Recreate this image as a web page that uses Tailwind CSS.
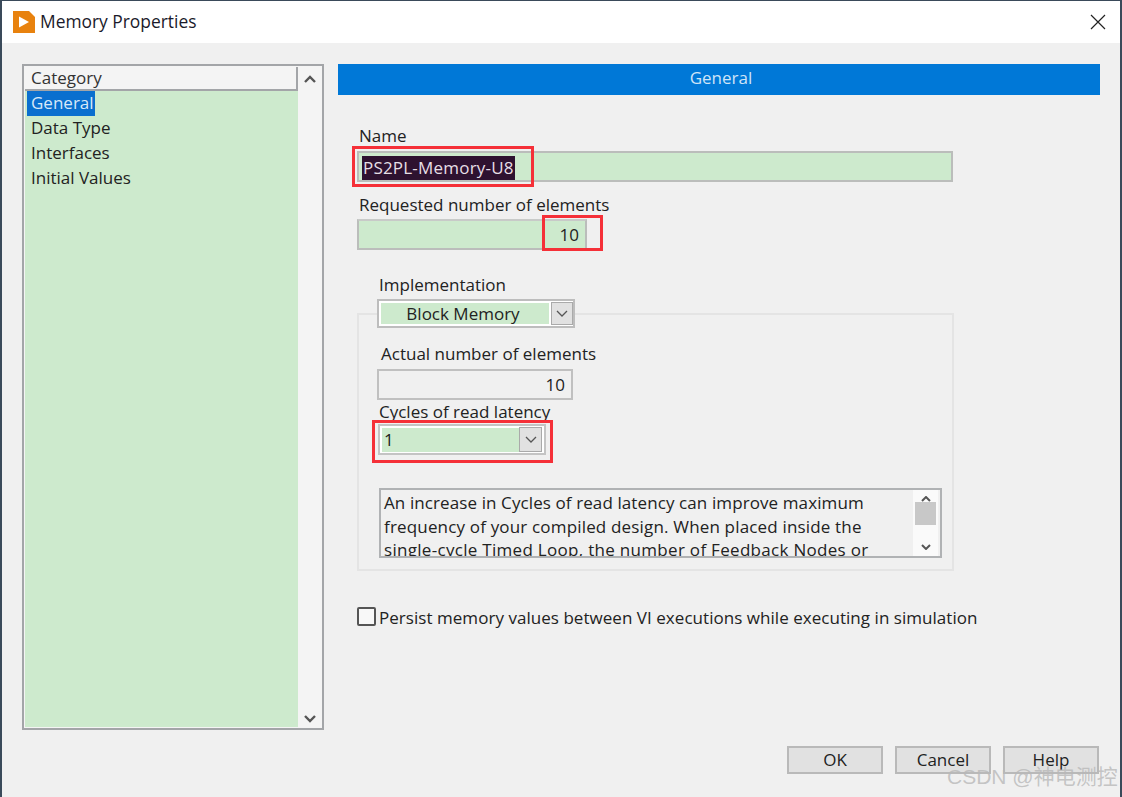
<!DOCTYPE html>
<html lang="en">
<head>
  <meta charset="UTF-8" />
  <title>Memory Properties</title>
  <script src="https://cdn.jsdelivr.net/npm/@tailwindcss/browser@4"></script>
</head>
<body class="bg-[#3a4a5a] font-['Open_Sans','Noto_Sans',sans-serif] text-[17px] text-[#222]">
  <div class="relative w-[1122px] h-[797px] overflow-hidden pl-[2px] pt-[1px] pr-[2px]">
    <div class="w-full h-[796px] flex flex-col bg-[#f0f0f0]">

      <!-- Title bar -->
      <div class="h-[42px] shrink-0 bg-white flex items-center pl-[10px] pr-[14px]">
        <svg class="w-[24px] h-[24px]" viewBox="0 0 24 24">
          <path d="M1 1h16l6 6v16H1z" fill="#e8820e" />
          <path d="M7 6.500v11l10-5.500z" fill="#fff" />
        </svg>
        <span class="ml-[4px] pb-[2px] text-[17.400px] text-[#1a1a2a]">Memory Properties</span>
        <svg class="ml-auto w-[16px] h-[16px]" viewBox="0 0 16 16" fill="none" stroke="#222" stroke-width="1.200">
          <path d="M1 1l14 14M15 1L1 15" />
        </svg>
      </div>

      <div class="flex pl-[20px] pt-[21px]">
        <!-- Category list -->
        <div class="w-[302px] h-[666px] shrink-0 border-2 border-[#a3a5a8] bg-[#f4f4f4] flex p-[1px]">
          <div class="w-[273px] flex flex-col">
            <div class="h-[24px] px-[6px] leading-[22px] border-r-2 border-b-2 border-[#a3a5a8] text-[#333]">Category</div>
            <div class="flex-1 bg-[#cdeacd] leading-[23px]">
              <div class="h-[25px] ml-[2px] pl-[4px] w-[68px] bg-[#0a6fcf] text-[#d8e8f8]">General</div>
              <div class="h-[25px] pl-[6px]">Data Type</div>
              <div class="h-[25px] pl-[6px]">Interfaces</div>
              <div class="h-[25px] pl-[6px]">Initial Values</div>
            </div>
          </div>
          <div class="flex-1 flex flex-col items-center justify-between pt-[8px] pb-[4px]">
            <svg class="w-[12px] h-[8px]" viewBox="0 0 12 8" fill="none" stroke="#555" stroke-width="2.400"><path d="M1 7l5-5 5 5" /></svg>
            <svg class="w-[12px] h-[8px]" viewBox="0 0 12 8" fill="none" stroke="#555" stroke-width="2.400"><path d="M1 1l5 5 5-5" /></svg>
          </div>
        </div>

        <!-- General panel -->
        <div class="ml-[14px] w-[762px]">
          <div class="h-[31px] bg-[#0078d7] text-[#cfe4f7] text-center pl-[4px] leading-[27px]">General</div>

          <div class="pl-[20px] w-[615px]">
            <div class="mt-[31px] pl-[1px] leading-[20px]">Name</div>
            <div class="mt-[5px] -ml-[1px] h-[31px] border-2 border-[#bbbdbb] bg-[#cdeacd] pl-[3px] pt-[2px]">
              <span class="inline-block bg-[#2e1230] text-[#e6dfe6] px-[1px] leading-[24px] tracking-[0.2px]">PS2PL-Memory-U8</span>
            </div>
            <div class="mt-[13px] pl-[1px] leading-[20px]">Requested number of elements</div>
            <div class="mt-[4px] -ml-[1px] w-[230px] h-[31px] border-2 border-[#bbbdbb] border-t-[#c8cac8] bg-[#cdeacd] text-right pr-[6px] leading-[27px]">10</div>

            <div class="relative z-10 ml-[19px] mt-[24px] w-[200px]">
              <div class="pl-[2px] leading-[22px]">Implementation</div>
              <div class="mt-[3px] w-[198px] h-[29px] border-2 border-[#bdbdbd] bg-white flex items-center pl-[2px]">
                <div class="w-[168px] h-[21px] bg-[#cdeacd] text-center pr-[4px] leading-[21px]">Block Memory</div>
                <div class="ml-[2px] w-[22px] h-[23px] border border-[#aaa] bg-[#e1e1e1] flex items-center justify-center">
                  <svg class="w-[12px] h-[7px]" viewBox="0 0 12 7" fill="none" stroke="#555" stroke-width="1.300"><path d="M1 1l5 5 5-5" /></svg>
                </div>
              </div>
            </div>

            <!-- Implementation group -->
            <div class="-mt-[15px] -ml-[1px] h-[258px] w-[597px] border-2 border-[#e4e4e4] pt-[27px] pl-[18px]">
              <div class="pl-[4px] leading-[24px]">Actual number of elements</div>
              <div class="mt-[3px] w-[196px] h-[31px] border-2 border-[#c0c0c0] text-right pr-[6px] leading-[27px]">10</div>
              <div class="pl-[2px] mt-[1px] leading-[22px]">Cycles of read latency</div>
              <div class="mt-[1px] ml-[1px] w-[168px] h-[31px] border-2 border-[#c4c4c4] bg-white flex items-center pl-[2px]">
                <div class="w-[137px] h-[24px] bg-[#cdeacd] pl-[2px] leading-[24px]">1</div>
                <div class="w-[23px] h-[25px] border border-[#aaa] bg-[#e1e1e1] flex items-center justify-center">
                  <svg class="w-[12px] h-[7px]" viewBox="0 0 12 7" fill="none" stroke="#555" stroke-width="1.300"><path d="M1 1l5 5 5-5" /></svg>
                </div>
              </div>

              <!-- Help text -->
              <div class="mt-[33px] ml-[2px] w-[563px] h-[70px] border-2 border-[#b0b2b4] flex overflow-hidden">
                <div class="flex-1 pl-[3px] pt-[1px] leading-[23.500px] text-[#222] overflow-hidden whitespace-nowrap">
                  <div class="tracking-[0.1px]">An increase in Cycles of read latency can improve maximum</div>
                  <div class="tracking-[0.17px]">frequency of your compiled design. When placed inside the</div>
                  <div class="tracking-[0.3px]">single-cycle Timed Loop, the number of Feedback Nodes or</div>
                </div>
                <div class="w-[25px] mr-[2px] bg-[#fafafa] flex flex-col items-center justify-between py-[6px]">
                  <svg class="w-[10px] h-[6px]" viewBox="0 0 10 6" fill="none" stroke="#555" stroke-width="2"><path d="M1 5l4-4 4 4" /></svg>
                  <div class="w-[21px] h-[23px] -mt-[20px] bg-[#c8c8c8]"></div>
                  <svg class="w-[10px] h-[6px]" viewBox="0 0 10 6" fill="none" stroke="#555" stroke-width="2"><path d="M1 1l4 4 4-4" /></svg>
                </div>
              </div>
            </div>

            <div class="mt-[34px] flex items-center whitespace-nowrap">
              <div class="-mt-[3px] -ml-[1px] w-[19px] h-[19px] shrink-0 border-2 border-[#555] rounded-[2px] bg-[#f8f8f8]"></div>
              <span class="ml-[3px] tracking-[0.04px]">Persist memory values between VI executions while executing in simulation</span>
            </div>
          </div>

          <!-- Buttons -->
          <div class="mt-[115px] flex justify-end gap-[12px] w-[761px]">
            <div class="w-[96px] h-[28px] border-2 border-[#b9b9b9] bg-[#e1e1e1] text-center leading-[24px]">OK</div>
            <div class="w-[96px] h-[28px] border-2 border-[#b9b9b9] bg-[#e1e1e1] text-center leading-[24px]">Cancel</div>
            <div class="w-[96px] h-[28px] border-2 border-[#b9b9b9] bg-[#e1e1e1] text-center leading-[24px]">Help</div>
          </div>
        </div>
      </div>
    </div>

    <!-- Red annotation boxes -->
    <div class="absolute z-20 left-[352px] top-[146px] w-[182px] h-[41px] border-[3px] border-[#f53038]"></div>
    <div class="absolute z-20 left-[542px] top-[215px] w-[61px] h-[36px] border-[3px] border-[#f53038]"></div>
    <div class="absolute z-20 left-[372px] top-[420px] w-[181px] h-[43px] border-[3px] border-[#f53038]"></div>

    <!-- Watermark -->
    <div class="absolute z-20 left-[947px] top-[764px] text-[21px] leading-[26px] text-[#b8b8b8]/80 font-['Liberation_Sans','Noto_Sans_CJK_SC',sans-serif] whitespace-nowrap">CSDN @神电测控</div>
  </div>
</body>
</html>
